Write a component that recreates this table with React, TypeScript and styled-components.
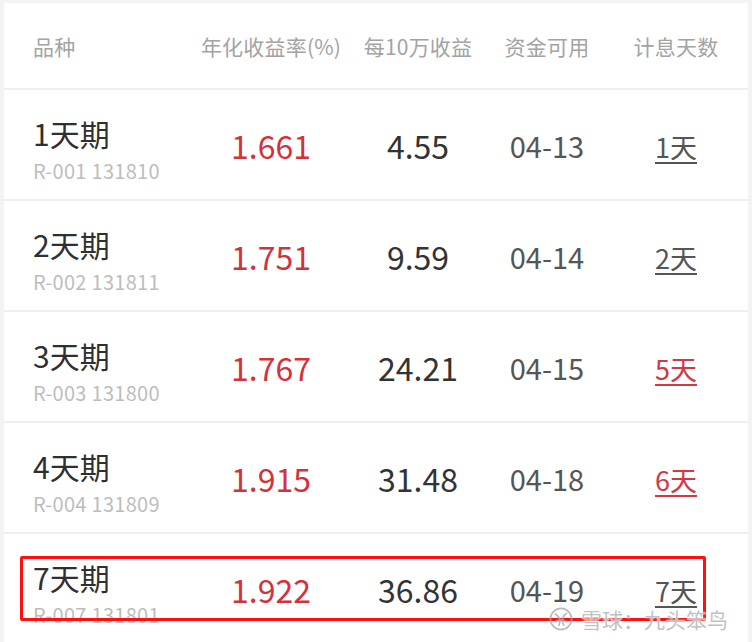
import React from "react";
import styled, { createGlobalStyle } from "styled-components";

const Global = createGlobalStyle`
  html, body { margin: 0; padding: 0; background: #f3f3f4; }
  body { font-family: "Noto Sans CJK SC", "Noto Sans", sans-serif; }
`;

const Page = styled.div`
  position: relative;
  width: 752px;
  height: 642px;
  overflow: hidden;
  box-sizing: border-box;
  padding: 3px 4px 0 4px;
  background: #f3f3f4;
`;

const Table = styled.div`
  background: #ffffff;
  height: 100%;
`;

const COLS = "192px 150px 144px 114px 144px";

const HeaderRow = styled.div`
  display: grid;
  grid-template-columns: ${COLS};
  align-items: center;
  height: 85px;
  border-bottom: 2px solid #efefef;
`;

const HeadCell = styled.div<{ $left?: boolean }>`
  font-size: 21px;
  color: #a3a3a3;
  text-align: ${(p) => (p.$left ? "left" : "center")};
  padding-left: ${(p) => (p.$left ? "29px" : "0")};
  letter-spacing: 0.2px;
`;

const Row = styled.div`
  display: grid;
  grid-template-columns: ${COLS};
  align-items: center;
  height: 109px;
  border-bottom: 2px solid #efefef;
`;

const NameCell = styled.div`
  display: flex;
  flex-direction: column;
  padding-left: 29px;
  padding-top: 10px;
`;

const Title = styled.div`
  font-size: 30px;
  line-height: 34px;
  color: #2f2f2f;
`;

const Code = styled.div`
  font-size: 20px;
  line-height: 26px;
  margin-top: 8px;
  color: #bdbdbd;
  letter-spacing: 0.3px;
`;

const Rate = styled.div`
  text-align: center;
  font-size: 32px;
  color: #d3323c;
`;

const Income = styled.div`
  text-align: center;
  font-size: 32px;
  color: #333333;
`;

const DateCell = styled.div`
  text-align: center;
  font-size: 29px;
  color: #555555;
`;

const DaysCell = styled.div<{ $red?: boolean }>`
  text-align: center;
  font-size: 27px;
  padding-top: 4px;
  color: ${(p) => (p.$red ? "#cf3a45" : "#555555")};
  span {
    text-decoration: underline;
    text-decoration-thickness: 2px;
    text-underline-offset: 4px;
  }
`;

const Highlight = styled.div`
  position: absolute;
  left: 20px;
  top: 556px;
  width: 686px;
  height: 65px;
  box-sizing: border-box;
  border: 3px solid #ff1010;
  border-radius: 2px;
  pointer-events: none;
`;

const Watermark = styled.div`
  position: absolute;
  left: 549px;
  top: 605px;
  display: flex;
  align-items: center;
  gap: 8px;
  font-size: 21px;
  line-height: 28px;
  color: rgba(165, 165, 165, 0.7);
  text-shadow: 0 0 2px #fff, 0 0 1px #fff;
  pointer-events: none;
  white-space: nowrap;
`;

const rows = [
  { name: "1天期", code: "R-001 131810", rate: "1.661", income: "4.55", date: "04-13", days: "1天", red: false },
  { name: "2天期", code: "R-002 131811", rate: "1.751", income: "9.59", date: "04-14", days: "2天", red: false },
  { name: "3天期", code: "R-003 131800", rate: "1.767", income: "24.21", date: "04-15", days: "5天", red: true },
  { name: "4天期", code: "R-004 131809", rate: "1.915", income: "31.48", date: "04-18", days: "6天", red: true },
  { name: "7天期", code: "R-007 131801", rate: "1.922", income: "36.86", date: "04-19", days: "7天", red: false },
];

const Logo = () => (
  <svg width="24" height="24" viewBox="0 0 34 34" fill="none">
    <circle cx="17" cy="17" r="15" stroke="rgba(165,165,165,0.75)" strokeWidth="2.5" />
    <path d="M9 10 C15 14, 17 20, 14 26" stroke="rgba(165,165,165,0.75)" strokeWidth="2.5" strokeLinecap="round" />
    <path d="M25 9 C19 13, 17 19, 21 26" stroke="rgba(165,165,165,0.75)" strokeWidth="2.5" strokeLinecap="round" />
    <path d="M10 20 C14 18, 20 18, 25 21" stroke="rgba(165,165,165,0.75)" strokeWidth="2.5" strokeLinecap="round" />
  </svg>
);

export default function App() {
  return (
    <>
      <Global />
      <Page>
        <Table>
          <HeaderRow>
            <HeadCell $left>品种</HeadCell>
            <HeadCell>年化收益率(%)</HeadCell>
            <HeadCell>每10万收益</HeadCell>
            <HeadCell>资金可用</HeadCell>
            <HeadCell>计息天数</HeadCell>
          </HeaderRow>
          {rows.map((r) => (
            <Row key={r.code}>
              <NameCell>
                <Title>{r.name}</Title>
                <Code>{r.code}</Code>
              </NameCell>
              <Rate>{r.rate}</Rate>
              <Income>{r.income}</Income>
              <DateCell>{r.date}</DateCell>
              <DaysCell $red={r.red}>
                <span>{r.days}</span>
              </DaysCell>
            </Row>
          ))}
        </Table>
        <Highlight />
        <Watermark>
          <Logo />
          <span>雪球：九头笨鸟</span>
        </Watermark>
      </Page>
    </>
  );
}
